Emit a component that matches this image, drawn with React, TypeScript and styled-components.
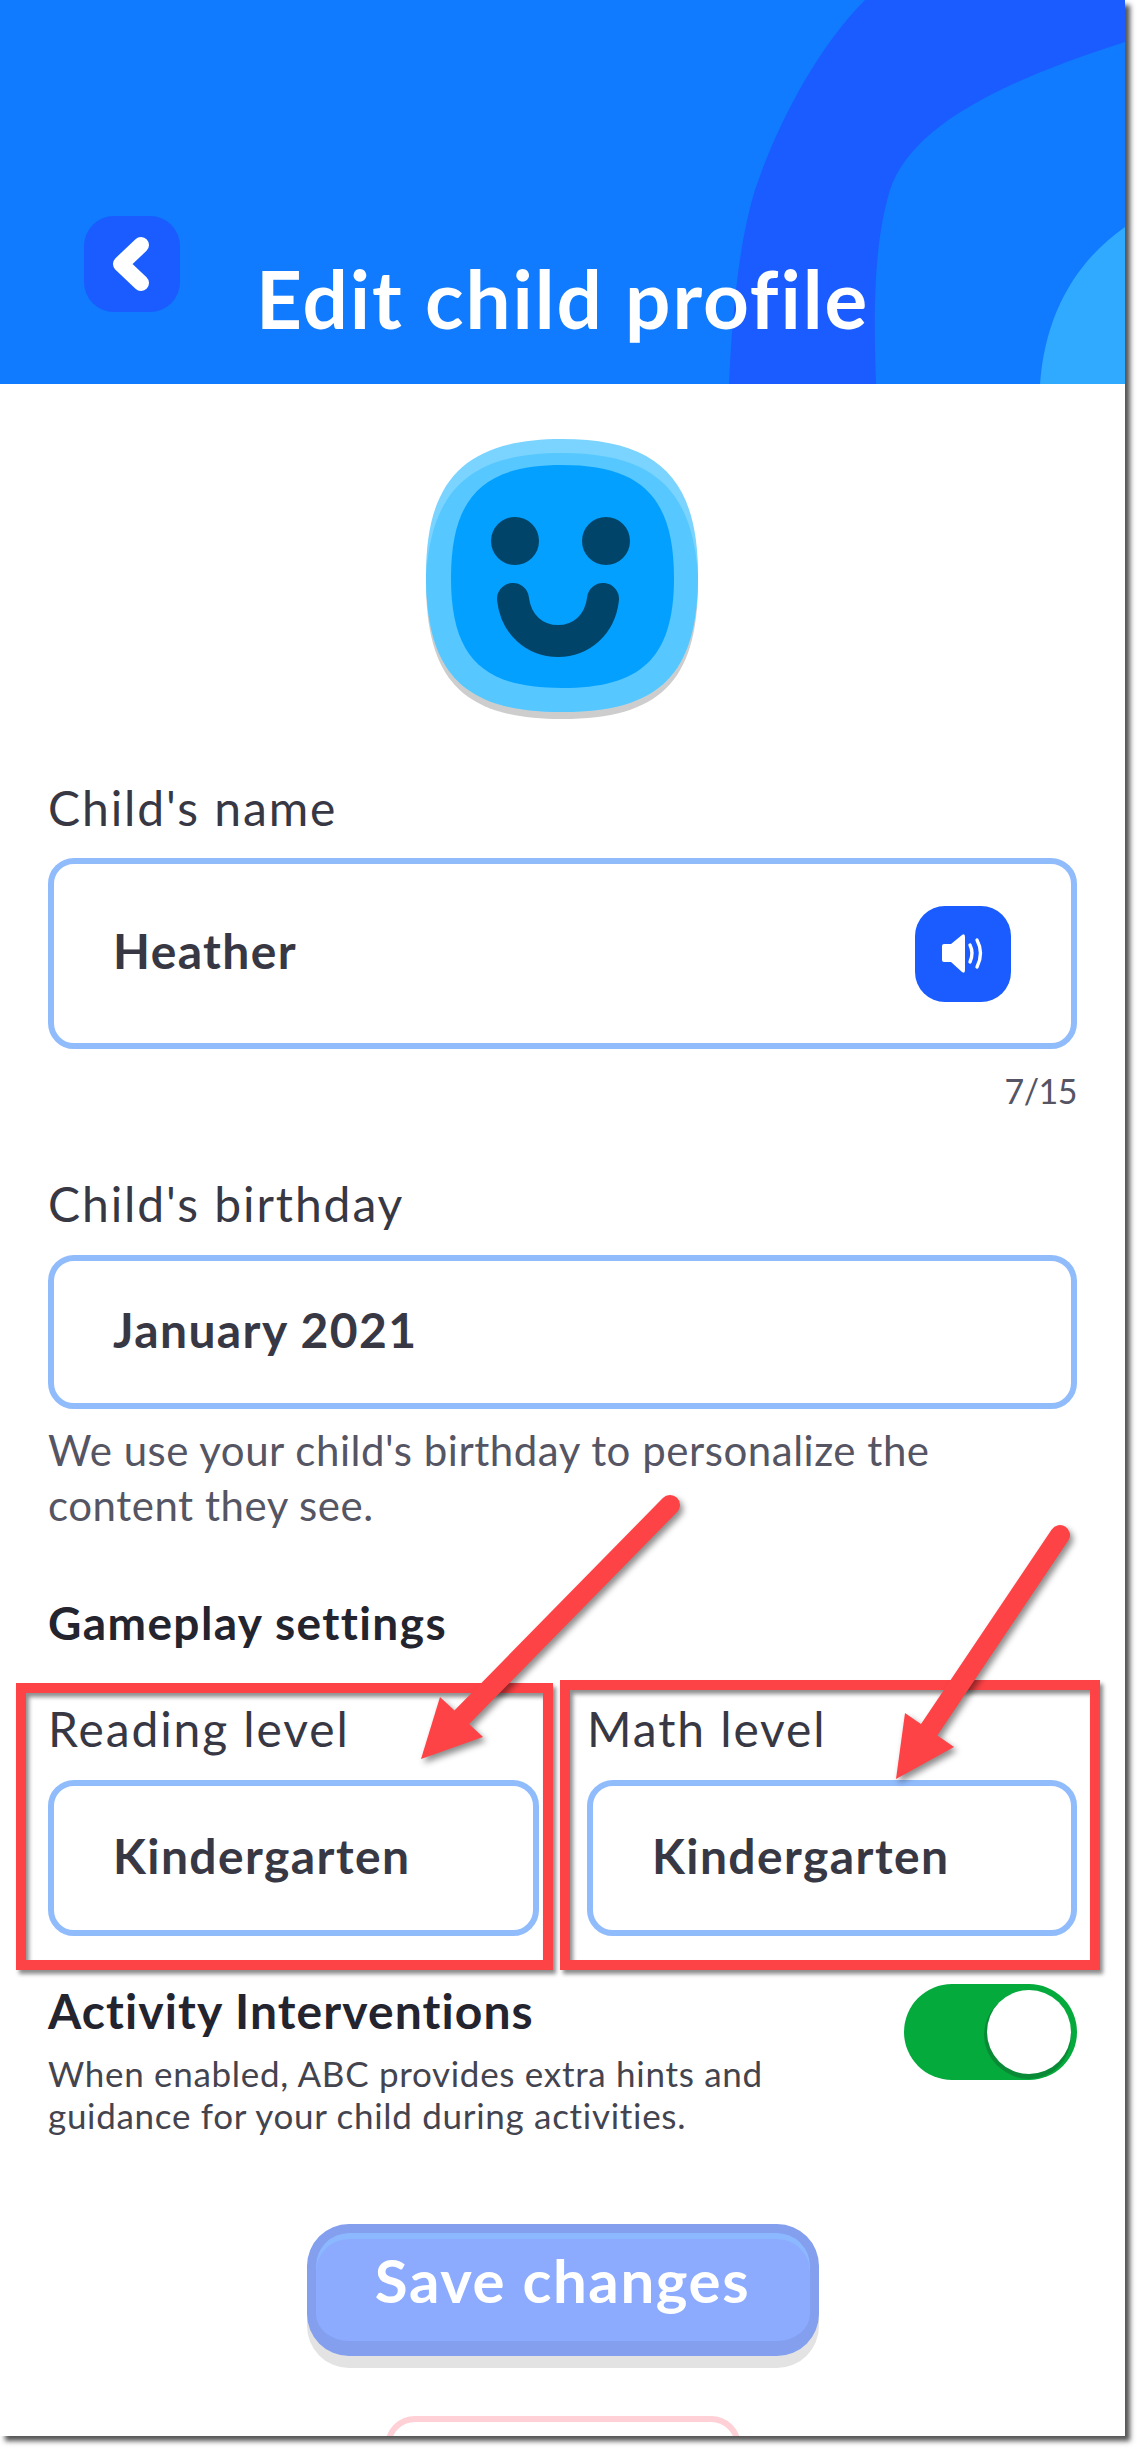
import React from "react";
import styled, { createGlobalStyle } from "styled-components";

const Global = createGlobalStyle`
  html, body { margin: 0; padding: 0; background: #fff; }
  * { box-sizing: border-box; }
  body { font-family: "Lato", "Liberation Sans", sans-serif; color: #383844; }
`;

const Page = styled.div`
  position: relative;
  width: 1125px;
  height: 2436px;
  background: #fff;
  box-shadow: 5px 5px 5px rgba(40, 40, 40, 0.8);
  overflow: hidden;
  margin-bottom: 18px;
`;

const Header = styled.header`
  position: relative;
  height: 384px;
  background: #107bff;
  overflow: hidden;
`;

const HeaderArt = styled.svg`
  position: absolute;
  inset: 0;
  width: 100%;
  height: 100%;
`;

const BackButton = styled.button`
  position: absolute;
  left: 84px;
  top: 216px;
  width: 96px;
  height: 96px;
  padding: 0;
  border: 0;
  border-radius: 30px;
  background: #1a5cff;
  display: flex;
`;

const Title = styled.h1`
  position: absolute;
  left: 0;
  right: 0;
  top: 250px;
  margin: 0;
  text-align: center;
  font-size: 80px;
  line-height: 96px;
  font-weight: 700;
  letter-spacing: 1.9px;
  color: #fff;
`;

const AvatarWrap = styled.div`
  display: flex;
  height: 360px;
  margin-top: 36px;
  padding-left: 380px;
`;

const Form = styled.main`
  padding: 0 48px;
`;

const Label = styled.label`
  display: block;
  font-size: 48px;
  line-height: 56px;
  font-weight: 400;
  letter-spacing: 1.9px;
  color: #383844;
`;

const Field = styled.div<{ $height: number; $gap: number }>`
  display: flex;
  align-items: center;
  justify-content: space-between;
  height: ${(p) => p.$height}px;
  margin-top: ${(p) => p.$gap}px;
  padding: 0 60px 6px 59px;
  border: 6px solid #91bcfc;
  border-radius: 26px;
  font-size: 48px;
  font-weight: 700;
  letter-spacing: 1.4px;
  color: #383844;
`;

const SpeakerButton = styled.button`
  width: 96px;
  height: 96px;
  padding: 0;
  margin-top: 6px;
  border: 0;
  border-radius: 30px;
  background: #1a5cff;
  display: flex;
`;

const Counter = styled.div`
  margin-top: 20px;
  text-align: right;
  font-size: 34px;
  line-height: 44px;
  letter-spacing: -0.5px;
  color: #555563;
`;

const BirthdayGroup = styled.section`
  margin-top: 63px;
`;

const Help = styled.p`
  margin: 14px 0 0;
  max-width: 960px;
  font-size: 42px;
  line-height: 55px;
  letter-spacing: 0.53px;
  color: #555563;
`;

const SectionTitle = styled.h2`
  margin: 62px 0 0;
  font-size: 46px;
  line-height: 56px;
  font-weight: 700;
  letter-spacing: 1.4px;
  color: #24242f;
`;

const LevelGrid = styled.div`
  display: grid;
  grid-template-columns: 491px 490px;
  justify-content: space-between;
  margin-top: 50px;
`;

const ToggleRow = styled.section`
  display: flex;
  justify-content: space-between;
  margin-top: 48px;
`;

const ToggleHeading = styled.h3`
  margin: 0;
  font-size: 48px;
  line-height: 54px;
  font-weight: 700;
  letter-spacing: 1.1px;
  color: #24242f;
`;

const ToggleCopy = styled.p`
  margin: 14px 0 0;
  width: 760px;
  font-size: 35px;
  line-height: 42px;
  letter-spacing: 0.7px;
  color: #44444f;
`;

const Toggle = styled.div`
  position: relative;
  flex: none;
  width: 173px;
  height: 96px;
  border-radius: 48px;
  background: #05aa3c;
`;

const Knob = styled.span`
  position: absolute;
  right: 6px;
  top: 6px;
  width: 84px;
  height: 84px;
  border-radius: 50%;
  background: #fff;
  box-shadow: 0 5px 0 #0a8a36, -3px 3px 0 #0a8a36;
`;

const Actions = styled.div`
  display: flex;
  flex-direction: column;
  align-items: center;
  margin-top: 88px;
`;

const SaveButton = styled.button`
  flex: none;
  width: 512px;
  height: 132px;
  padding: 0 0 15px;
  border: 9px solid #839fee;
  border-bottom-width: 15px;
  border-radius: 42px;
  background: #8cabff;
  box-shadow: 0 12px 0 #e3e3e3, inset 0 6px 0 #8cb8ff;
  color: #fff;
  font-family: inherit;
  font-size: 60px;
  font-weight: 700;
  letter-spacing: 1.6px;
`;

const RemoveButton = styled.button`
  flex: none;
  width: 356px;
  height: 100px;
  margin-top: 60px;
  background: #fff;
  border: 6px solid #ffd0d5;
  border-radius: 30px;
`;

const Frame = styled.div<{ $left: number; $top: number; $width: number; $height: number }>`
  position: absolute;
  left: ${(p) => p.$left}px;
  top: ${(p) => p.$top}px;
  width: ${(p) => p.$width}px;
  height: ${(p) => p.$height}px;
  border: 10px solid #fe4346;
  box-shadow: 3px 4px 4px rgba(0, 0, 0, 0.45), inset 3px 4px 4px rgba(0, 0, 0, 0.45);
`;

const Callouts = styled.svg`
  position: absolute;
  left: 0;
  top: 0;
  width: 1125px;
  height: 2436px;
  pointer-events: none;
  filter: drop-shadow(3px 4px 3px rgba(0, 0, 0, 0.45));
`;

const Chevron = () => (
  <svg width="96" height="96" viewBox="0 0 96 96">
    <path d="M57 29 L37 48 L57 67" fill="none" stroke="#fff" strokeWidth="16" strokeLinecap="round" strokeLinejoin="round" />
  </svg>
);

const Speaker = () => (
  <svg width="96" height="96" viewBox="0 0 96 96">
    <path d="M29 38h7l11-9q3-2 3 2v33q0 4-3 2l-11-10h-7q-2 0-2-2v-14q0-2 2-2z" fill="#fff" />
    <path d="M55 39q4 8 0 17M62 34q7 13 0 27" fill="none" stroke="#fff" strokeWidth="3.4" strokeLinecap="round" />
  </svg>
);

// The squircle silhouette, its rim and its face; the base shadow is the silhouette moved down.
const SILHOUETTE =
  "M182 19C279 19 318 60 318 155C318 255 279 292 182 292C85 292 46 255 46 155C46 60 85 19 182 19Z";
const RIM =
  "M46 155C52 70 90 33 182 33C274 33 312 70 318 155C318 255 279 292 182 292C85 292 46 255 46 155Z";
const FACE =
  "M182 45C259 45 294 75 294 158C294 240 259 268 182 268C105 268 71 240 71 158C71 75 105 45 182 45Z";

const Avatar = () => (
  <svg width="340" height="320" viewBox="0 0 340 320">
    <path d={SILHOUETTE} transform="translate(0 7)" fill="#cdcdcd" />
    <path d={SILHOUETTE} fill="#7ad4ff" />
    <path d={RIM} fill="#57c8ff" />
    <path d={FACE} fill="#04a0ff" />
    <circle cx="135" cy="121" r="24" fill="#004569" />
    <circle cx="226" cy="121" r="24" fill="#004569" />
    <path d="M133 179C136 205 155 221 178 221C201 221 220 205 223 179" fill="none" stroke="#004569" strokeWidth="32" strokeLinecap="round" />
  </svg>
);

export default function App() {
  return (
    <>
      <Global />
      <Page>
        <Header>
          <HeaderArt viewBox="0 0 1125 384">
            <path d="M865 0C815 50 775 130 755 190C738 245 732 320 729 384H876C873 300 875 240 890 190C910 130 990 85 1125 42V0Z" fill="#1a5cff" />
            <path d="M1125 227C1075 262 1045 315 1040 384H1125Z" fill="#30aaff" />
          </HeaderArt>
          <BackButton aria-label="Back">
            <Chevron />
          </BackButton>
          <Title>Edit child profile</Title>
        </Header>
        <AvatarWrap>
          <Avatar />
        </AvatarWrap>
        <Form>
          <Label>Child's name</Label>
          <Field $height={191} $gap={22}>
            Heather
            <SpeakerButton aria-label="Hear name">
              <Speaker />
            </SpeakerButton>
          </Field>
          <Counter>7/15</Counter>
          <BirthdayGroup>
            <Label>Child's birthday</Label>
            <Field $height={154} $gap={23}>January 2021</Field>
            <Help>We use your child's birthday to personalize the content they see.</Help>
          </BirthdayGroup>
          <SectionTitle>Gameplay settings</SectionTitle>
          <LevelGrid>
            <div>
              <Label>Reading level</Label>
              <Field $height={156} $gap={23}>Kindergarten</Field>
            </div>
            <div>
              <Label>Math level</Label>
              <Field $height={156} $gap={23}>Kindergarten</Field>
            </div>
          </LevelGrid>
          <ToggleRow>
            <div>
              <ToggleHeading>Activity Interventions</ToggleHeading>
              <ToggleCopy>When enabled, ABC provides extra hints and guidance for your child during activities.</ToggleCopy>
            </div>
            <Toggle>
              <Knob />
            </Toggle>
          </ToggleRow>
          <Actions>
            <SaveButton>Save changes</SaveButton>
            <RemoveButton aria-label="Remove" />
          </Actions>
        </Form>
        <Frame $left={16} $top={1683} $width={537} $height={287} />
        <Frame $left={560} $top={1680} $width={540} $height={290} />
        <Callouts viewBox="0 0 1125 2436">
          <g fill="#fe4346" stroke="#fe4346" strokeLinecap="round">
            <path d="M670 1505L462 1717" fill="none" strokeWidth="20" />
            <path d="M421 1759L440 1697L483 1737Z" strokeWidth="0" />
            <path d="M1060 1535L929 1730" fill="none" strokeWidth="20" />
            <path d="M896 1779L905 1713L954 1747Z" strokeWidth="0" />
          </g>
        </Callouts>
      </Page>
    </>
  );
}
